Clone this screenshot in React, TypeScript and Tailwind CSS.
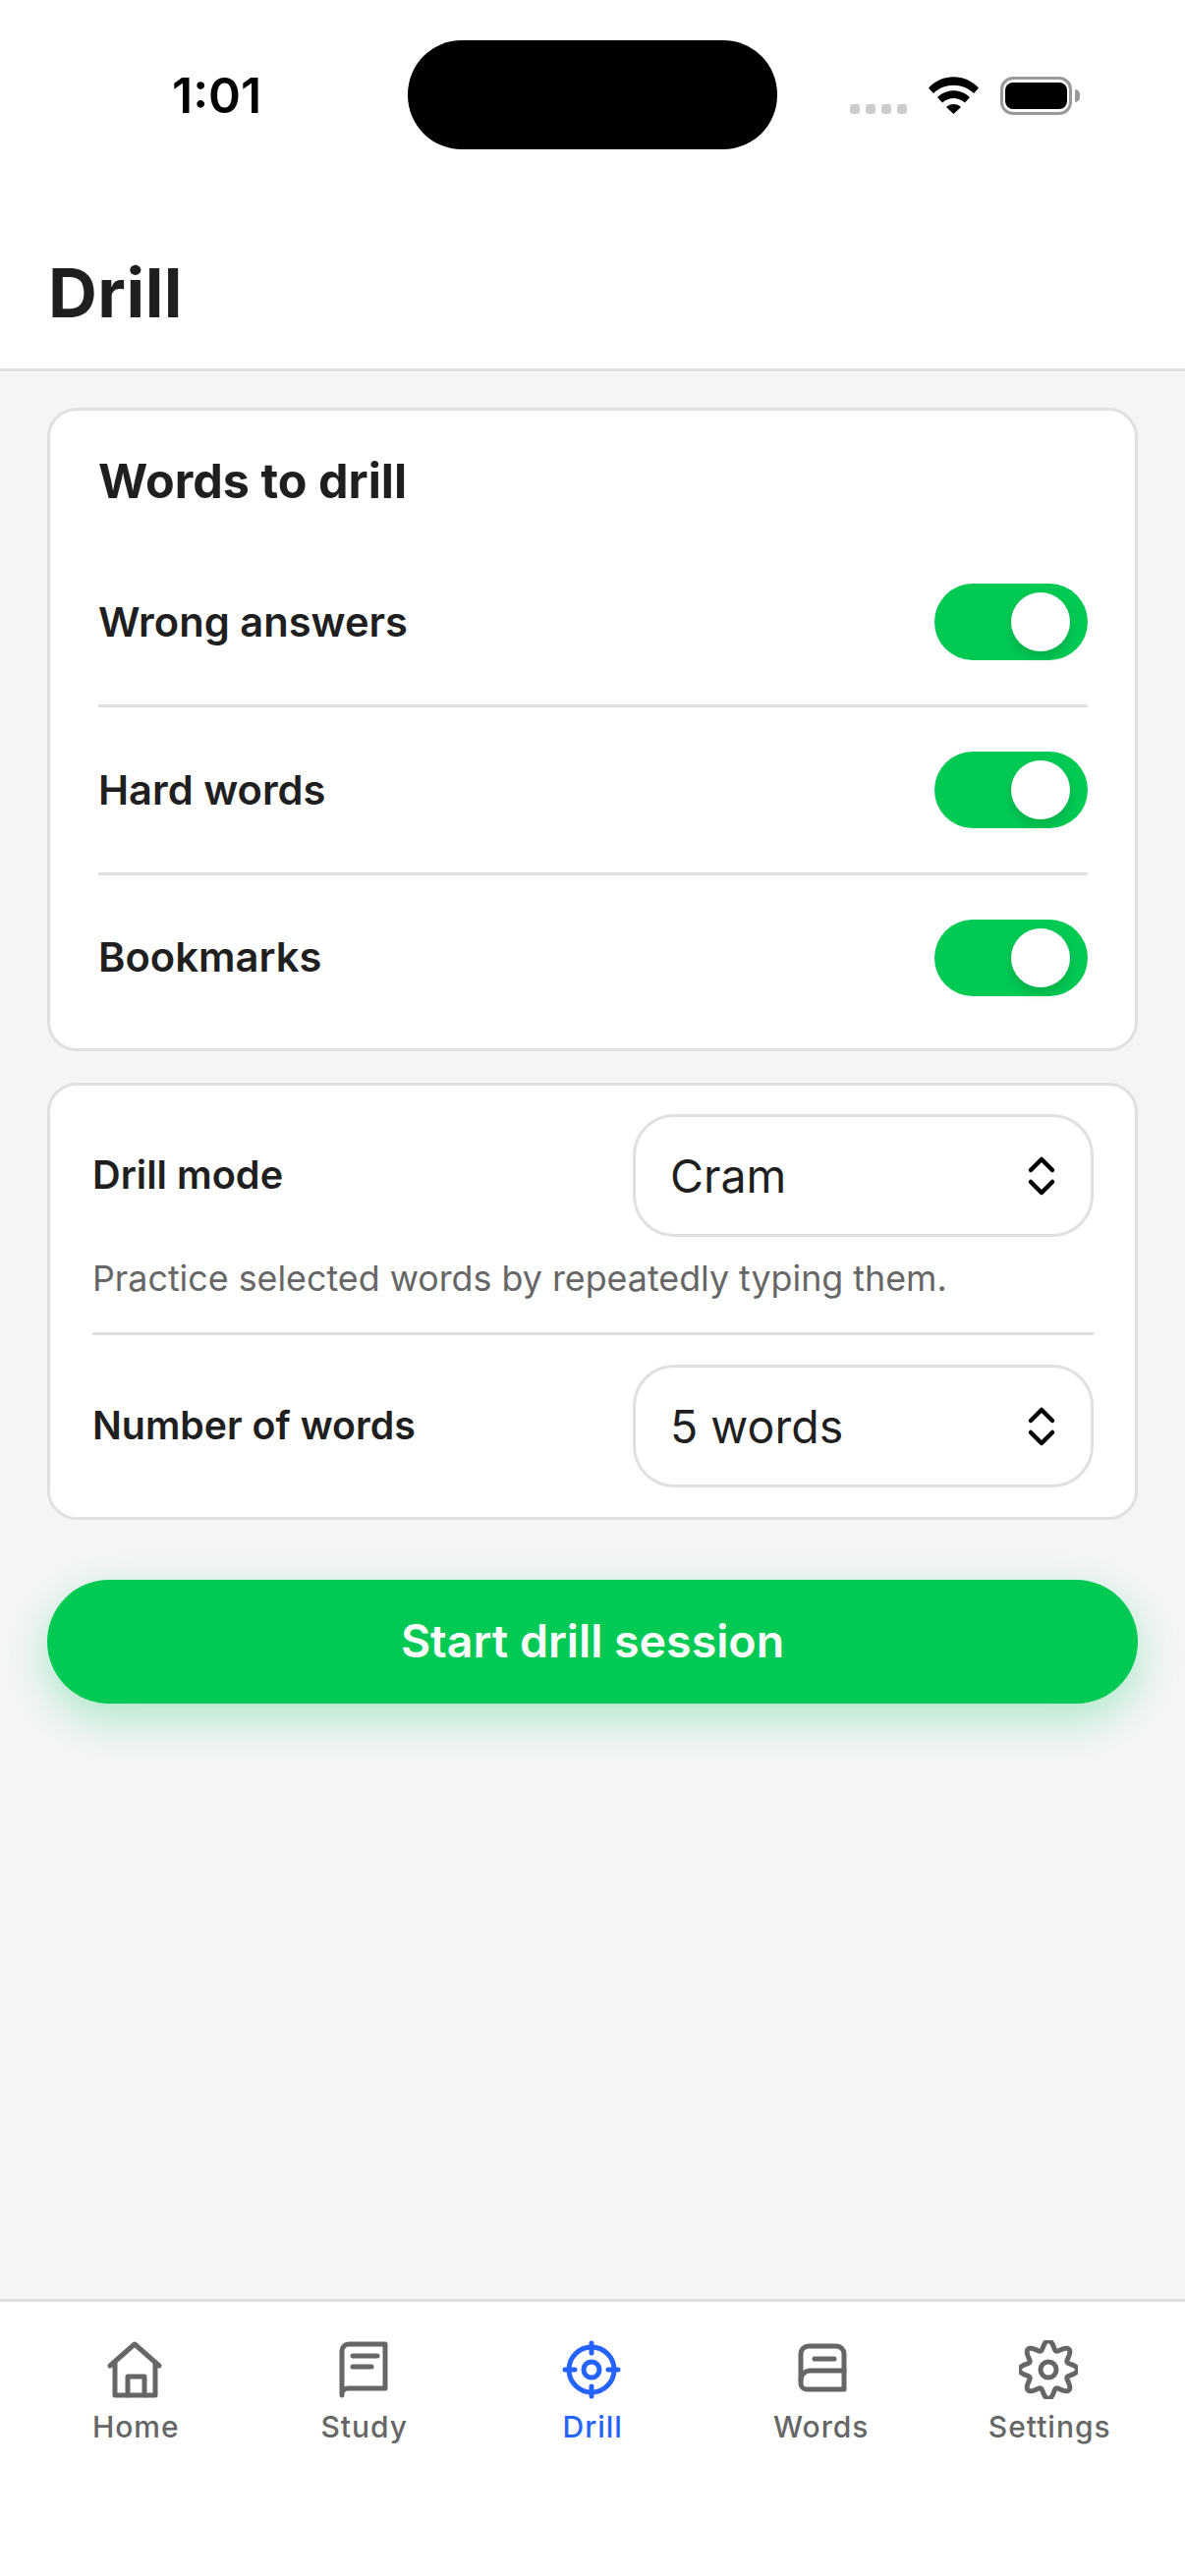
const font = "font-['Inter',sans-serif]";

const Toggle = () => (
  <div className="flex h-[78px] w-[156px] items-center justify-end rounded-full bg-[#00ca54] pr-[18px]">
    <div className="h-[60px] w-[60px] rounded-full bg-white shadow-[0_6px_12px_rgba(0,0,0,0.14)]" />
  </div>
);

const ToggleRow = ({ label, last }: { label: string; last?: boolean }) => (
  <div className={`flex items-center justify-between ${last ? "h-[167px]" : "h-[171px] border-b-[3px] border-[#e0e0e0]"}`}>
    <span className="text-[41.7px] font-semibold text-[#1f1f1f]">{label}</span>
    <Toggle />
  </div>
);

const Chevrons = () => (
  <svg width="30" height="42" viewBox="0 0 30 42" fill="none" stroke="#000" strokeWidth="4.5" strokeLinecap="round" strokeLinejoin="round">
    <path d="M4 15 15 4l11 11" />
    <path d="M4 27l11 11 11-11" />
  </svg>
);

const Select = ({ value }: { value: string }) => (
  <div className="flex h-[125px] w-[469px] items-center justify-between rounded-[42px] border-[3px] border-[#e0e0e0] pr-[35px] pl-[35px]">
    <span className="pt-[2px] text-[46.5px] text-[#1f1f1f]">{value}</span>
    <Chevrons />
  </div>
);

const gearPath = () => {
  const pts: string[] = [];
  for (let i = 0; i < 240; i++) {
    const t = (i / 240) * Math.PI * 2;
    const r = 25 + 4.5 * Math.cos(8 * t);
    pts.push(`${(30 + r * Math.sin(t)).toFixed(2)} ${(30 - r * Math.cos(t)).toFixed(2)}`);
  }
  return `M${pts.join("L")}Z`;
};

const icons: Record<string, JSX.Element> = {
  Home: (
    <>
      <path d="M5 26 30 4l25 22" />
      <path d="M10 23v33h41V23" />
      <path d="M23 56V37h17v19" />
    </>
  ),
  Study: (
    <>
      <path d="M8 56V11a7 7 0 0 1 7-7h37v45H14a6 6 0 0 0-6 7Z" />
      <path d="M19 16h25" />
      <path d="M19 27h19" />
    </>
  ),
  Drill: (
    <>
      <circle cx="30" cy="30" r="23" />
      <circle cx="30" cy="30" r="8" />
      <path d="M30 3v10M30 47v10M3 30h10M47 30h10" />
    </>
  ),
  Words: (
    <>
      <path d="M10 44V14a8 8 0 0 1 8-8h28a8 8 0 0 1 8 8v36H16a6 6 0 0 1-6-6Z" />
      <path d="M54 31H19a9.500 9.500 0 0 0-9 9" />
      <path d="M24 19h20" />
    </>
  ),
  Settings: (
    <>
      <path d={gearPath()} />
      <circle cx="30" cy="30" r="8" />
    </>
  ),
};

const NavItem = ({ label, active }: { label: string; active?: boolean }) => (
  <div className="flex w-[232.5px] flex-col items-center">
    <svg width="60" height="60" viewBox="0 0 60 60" fill="none" stroke={active ? "#2563ff" : "#666666"} strokeWidth="5" strokeLinecap="round" strokeLinejoin="round">
      {icons[label]}
    </svg>
    <span className={`mt-[8px] pl-[2px] text-[30px] leading-[40px] font-medium tracking-[1px] ${active ? "text-[#2563ff]" : "text-[#666666]"}`}>{label}</span>
  </div>
);

export default function App() {
  return (
    <div className={`flex h-[2622px] w-[1206px] flex-col overflow-hidden bg-[#f4f5f7] ${font}`}>
      <header className="h-[378px] border-b-[3px] border-[#e0e0e0] bg-white">
        <div className="flex h-[258px] items-start pt-[41px]">
          <div className="flex h-[113px] w-[415px] items-center pl-[175px]">
            <span className="text-[50px] font-semibold text-black">1:01</span>
          </div>
          <div className="h-[111px] w-[376px] rounded-[55px] bg-black" />
          <div className="flex h-[111px] flex-1 items-start pt-[37px] pl-[74px]">
            <div className="mt-[28px] flex gap-[6px]">
              <div className="h-[10px] w-[10px] rounded-[3px] bg-[#cccccc]" />
              <div className="h-[10px] w-[10px] rounded-[3px] bg-[#cccccc]" />
              <div className="h-[10px] w-[10px] rounded-[3px] bg-[#cccccc]" />
              <div className="h-[10px] w-[10px] rounded-[3px] bg-[#cccccc]" />
            </div>
            <svg className="ml-[22px]" width="51" height="38" viewBox="0 0 51 38" fill="#000">
              <path d="M0 11.500C14 -3.500 37 -3.500 51 11.500L46 17C35 6 16 6 5 17Z" />
              <path d="M9 21C18 12 33 12 42 21L37 26.500C30 20.500 21 20.500 14 26.500Z" />
              <path d="M18 31C22 27 29 27 33 31L25.500 38Z" />
            </svg>
            <div className="ml-[22px] flex h-[39px] w-[73px] items-center justify-center rounded-[13px] border-[3px] border-[#999999]">
              <div className="h-[27px] w-[63px] rounded-[8px] bg-black" />
            </div>
            <div className="mt-[13px] ml-[3px] h-[13px] w-[5px] rounded-r-full bg-[#999999]" />
          </div>
        </div>
        <h1 className="pl-[49px] text-[69px] leading-[80px] font-bold tracking-[0.5px] text-[#1f1f1f]">Drill</h1>
      </header>

      <main className="flex flex-1 flex-col px-[48px] pt-[37px]">
        <section className="h-[655px] rounded-[30px] border-[3px] border-[#e0e0e0] bg-white pr-[48px] pl-[49px]">
          <h2 className="pt-[43px] text-[48.5px] leading-[58px] font-bold tracking-[0px] text-[#1f1f1f]">Words to drill</h2>
          <div className="mt-[30px]">
            <ToggleRow label="Wrong answers" />
            <ToggleRow label="Hard words" />
            <ToggleRow label="Bookmarks" last />
          </div>
        </section>

        <section className="mt-[32px] rounded-[30px] border-[3px] border-[#e0e0e0] bg-white pt-[29px] pr-[42px] pb-[30px] pl-[43px]">
          <div className="flex items-center justify-between">
            <span className="text-[39.7px] font-semibold text-[#1f1f1f]">Drill mode</span>
            <Select value="Cram" />
          </div>
          <p className="mt-[15px] text-[35.8px] leading-[54px] text-[#666666]">Practice selected words by repeatedly typing them.</p>
          <div className="mt-[28px] h-[3px] bg-[#e0e0e0]" />
          <div className="mt-[30px] flex items-center justify-between">
            <span className="text-[39.3px] font-semibold text-[#1f1f1f]">Number of words</span>
            <Select value="5 words" />
          </div>
        </section>

        <button className="mt-[61px] h-[126px] rounded-full bg-[#00ca54] text-[46.500px] font-semibold text-white shadow-[0_15px_45px_rgba(0,200,83,0.3)]">
          Start drill session
        </button>
      </main>

      <nav className="flex h-[282px] items-start border-t-[3px] border-[#e0e0e0] bg-white px-[21px] pt-[39px]">
        <NavItem label="Home" />
        <NavItem label="Study" />
        <NavItem label="Drill" active />
        <NavItem label="Words" />
        <NavItem label="Settings" />
      </nav>
    </div>
  );
}
